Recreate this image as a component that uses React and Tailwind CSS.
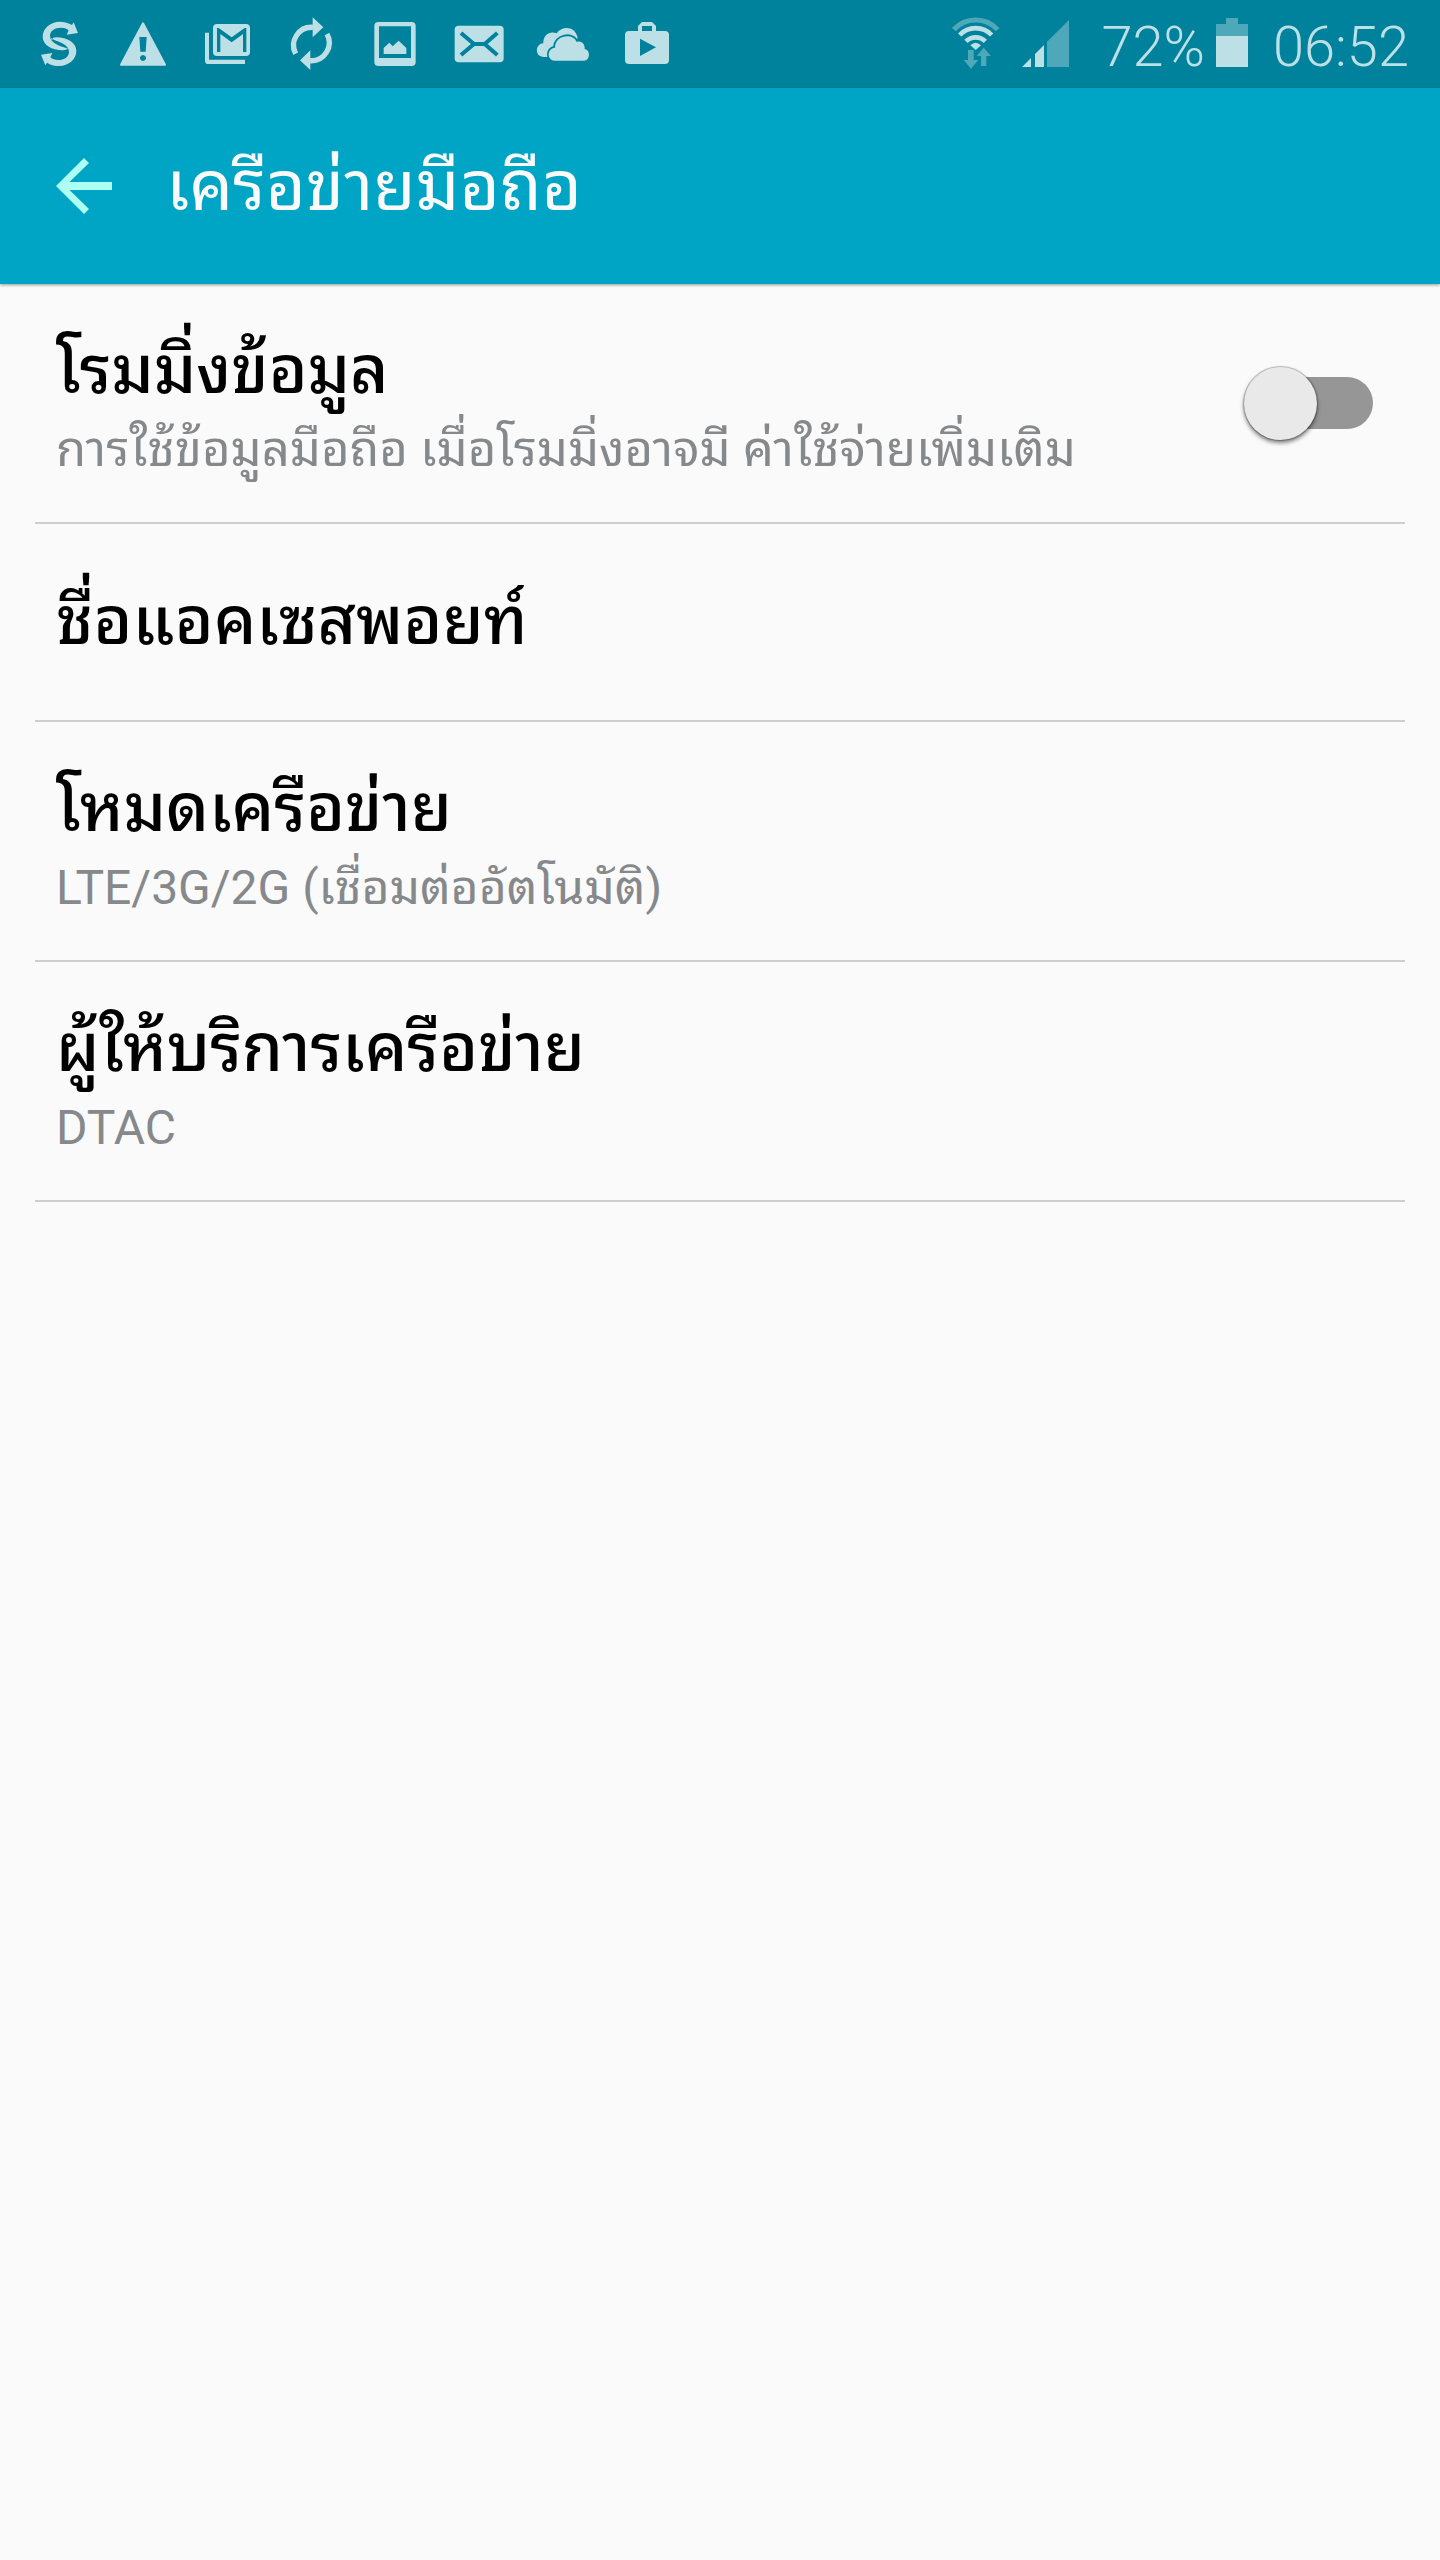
import { useState } from 'react'

const rows = [
  {
    title: 'โรมมิ่งข้อมูล',
    summary: 'การใช้ข้อมูลมือถือ เมื่อโรมมิ่งอาจมี ค่าใช้จ่ายเพิ่มเติม',
    summarySize: 'text-[49px]',
    toggle: true,
  },
  { title: 'ชื่อแอคเซสพอยท์' },
  { title: 'โหมดเครือข่าย', summary: 'LTE/3G/2G (เชื่อมต่ออัตโนมัติ)', summarySize: 'text-[48px]' },
  { title: 'ผู้ให้บริการเครือข่าย', summary: 'DTAC', summarySize: 'text-[48px]' },
]

function StatusIcon({ viewBox, children }) {
  return (
    <svg viewBox={viewBox} className="w-[84px] h-[88px] shrink-0" fill="#bddfe6">
      {children}
    </svg>
  )
}

function NotificationIcons() {
  const ribbon =
    'M216 75C202 67 192 65 180 65C150 65 128 86 128 110C128 135 155 150 188 151C197 150 203 148 206 145C175 139 150 126 150 108C150 92 165 83 182 83C192 83 200 85 206 91L200 104L234 99L221 67Z'

  return (
    <div className="flex pl-[18px]">
      {/* sync S */}
      <StatusIcon viewBox="54 0 252 264">
        <path d={ribbon} />
        <path d={ribbon} transform="rotate(180 178.5 131.5)" />
        <path d="M155 112C162 127 182 133 204 146" fill="none" stroke="#00829c" strokeWidth="2" />
      </StatusIcon>
      {/* warning */}
      <StatusIcon viewBox="306 0 252 264">
        <path
          fillRule="evenodd"
          d="M426 69Q429 65 432 69L497 191Q500 197 494 197H364Q358 197 361 191ZM418 111L421 155H437L440 111ZM429 165a9 9 0 1 0 .1 0Z"
        />
      </StatusIcon>
      {/* gmail */}
      <StatusIcon viewBox="558 0 252 264">
        <path d="M615 98H627V179H735V192H625Q615 192 615 182Z" />
        <path
          fillRule="evenodd"
          d="M651 72H738Q750 72 750 84V156Q750 168 738 168H651Q639 168 639 156V84Q639 72 651 72ZM651 84V156H661V102L695 127L729 102V156H739V84H734L695 112L656 84Z"
        />
      </StatusIcon>
      {/* refresh */}
      <StatusIcon viewBox="810 0 252 264">
        <path d="M887 161A54 54 0 0 1 939 82" fill="none" stroke="#bddfe6" strokeWidth="16" />
        <path d="M981 102A54 54 0 0 1 930 182" fill="none" stroke="#bddfe6" strokeWidth="16" />
        <path d="M938 52L970 82L938 112ZM931 151L900 181L931 210Z" />
      </StatusIcon>
      {/* picture */}
      <StatusIcon viewBox="42 0 252 264">
        <path
          fillRule="evenodd"
          d="M115 66H215Q227 66 227 78V186Q227 198 215 198H115Q103 198 103 186V78Q103 66 115 66ZM117 79V174H213V79Z"
        />
        <path d="M131 162V144L148 128L158 139L176 122L199 144V162Z" />
      </StatusIcon>
      {/* mail */}
      <StatusIcon viewBox="294 0 252 264">
        <rect x="344" y="77" width="147" height="110" rx="12" />
        <path
          d="M363 99L402 132H434L472 99M363 165L402 132H434L472 165"
          fill="none"
          stroke="#00829c"
          strokeWidth="12"
        />
      </StatusIcon>
      {/* clouds */}
      <StatusIcon viewBox="546 0 252 264">
        <path d="M612 171C584 171 584 132 610 130C609 102 632 92 650 100C664 78 706 76 713 114L690 150L650 171Z" />
        <path
          d="M645 182C620 182 620 145 645 143C645 104 700 98 710 126C724 120 736 133 734 147C752 149 751 182 732 182Z"
          stroke="#00829c"
          strokeWidth="11"
          paintOrder="stroke"
        />
      </StatusIcon>
      {/* play store */}
      <StatusIcon viewBox="798 0 252 264">
        <path
          fillRule="evenodd"
          d="M867 93H894V78L906 66H936L948 78V93H975Q987 93 987 105V180Q987 192 975 192H867Q855 192 855 180V105Q855 93 867 93ZM906 78V93H936V78ZM900 116V168L948 142Z"
        />
      </StatusIcon>
    </div>
  )
}

function StatusBar() {
  return (
    <div className="h-[88px] bg-[#00829c] flex justify-between overflow-hidden">
      <NotificationIcons />
      <div className="flex items-center pr-[31px] text-[56px] leading-[88px] font-light text-[#bddfe6]">
        <svg viewBox="66 0 354 264" className="w-[118px] h-[88px] mr-[31px]" fill="#bddfe6">
          <g fill="none" strokeWidth="15">
            <path d="M71 89A90 90 0 0 1 203 89" stroke="#4da8ba" />
            <path d="M89 105A66 66 0 0 1 185 105" stroke="#bddfe6" strokeWidth="14" />
            <path d="M108 124A41 41 0 0 1 166 124" stroke="#bddfe6" strokeWidth="14" />
          </g>
          <path d="M121 136Q137 121 153 136L137 150Z" />
          <path
            d="M114 150H131V180H145L123 206L101 180H114ZM161 143L183 168H169V198H153V168H140Z"
            fill="#4da8ba"
          />
          <path d="M276 201L303 174V201ZM315 201V162L342 135V201Z" />
          <path d="M351 201V125L417 60V201Z" fill="#4da8ba" />
        </svg>
        <span className="pt-[5px]">72%</span>
        <svg viewBox="858 0 96 264" className="w-[32px] h-[88px] ml-[11px] mr-[25px]">
          <path d="M888 54H924V72H954V108H858V72H888Z" fill="#4da8ba" />
          <path d="M858 108H954V201H858Z" fill="#bddfe6" />
        </svg>
        <span className="pt-[5px]">06:52</span>
      </div>
    </div>
  )
}

function Toggle({ checked, onChange }) {
  return (
    <button
      type="button"
      role="switch"
      aria-checked={checked}
      onClick={() => onChange(!checked)}
      className={`w-[130px] h-[73px] shrink-0 flex items-center ${checked ? 'justify-end' : 'justify-start'}`}
    >
      <span className="size-[73px] shrink-0 rounded-full bg-[#e9e9e9] z-10 shadow-[0_0_1px_1px_rgba(0,0,0,0.25),0_3px_4px_rgba(0,0,0,0.5)]" />
      <span className="w-[93px] h-[52px] -ml-[37px] shrink-0 rounded-full bg-[#969696]" />
    </button>
  )
}

export default function App() {
  const [roaming, setRoaming] = useState(false)

  return (
    <div className="min-h-[2560px] bg-[#fafafa] font-[Roboto,'Noto_Sans_Thai_Looped','Noto_Sans_Thai',sans-serif]">
      <StatusBar />
      <header className="h-[196px] bg-[#00a5c5] flex items-center pl-[56px] shadow-[0_1px_3px_rgba(0,0,0,0.4)]">
        <svg viewBox="0 0 56 56" className="w-[56px] h-[56px]" fill="#acfff2">
          <path d="M0 28L28 0L33 5L13.500 24H56V32H13.500L33 51L28 56Z" />
        </svg>
        <h1 className="ml-[54px] pt-[2px] text-[69px] leading-[100px] text-[#fafafa]">เครือข่ายมือถือ</h1>
      </header>

      <ul className="px-[35px]">
        {rows.map((row) => (
          <li
            key={row.title}
            className={`flex items-center justify-between border-b-2 border-[#cdcdcd] pl-[21px] pr-[31px] ${
              row.summary ? 'h-[240px]' : 'h-[198px]'
            }`}
          >
            <div className={`whitespace-nowrap ${row.summary ? 'pt-[6px]' : ''}`}>
              <p className="text-[66px] leading-[88px] font-medium text-black">{row.title}</p>
              {row.summary && <p className={`${row.summarySize} leading-[70px] text-[#86898b]`}>{row.summary}</p>}
            </div>
            {row.toggle && <Toggle checked={roaming} onChange={setRoaming} />}
          </li>
        ))}
      </ul>
    </div>
  )
}
